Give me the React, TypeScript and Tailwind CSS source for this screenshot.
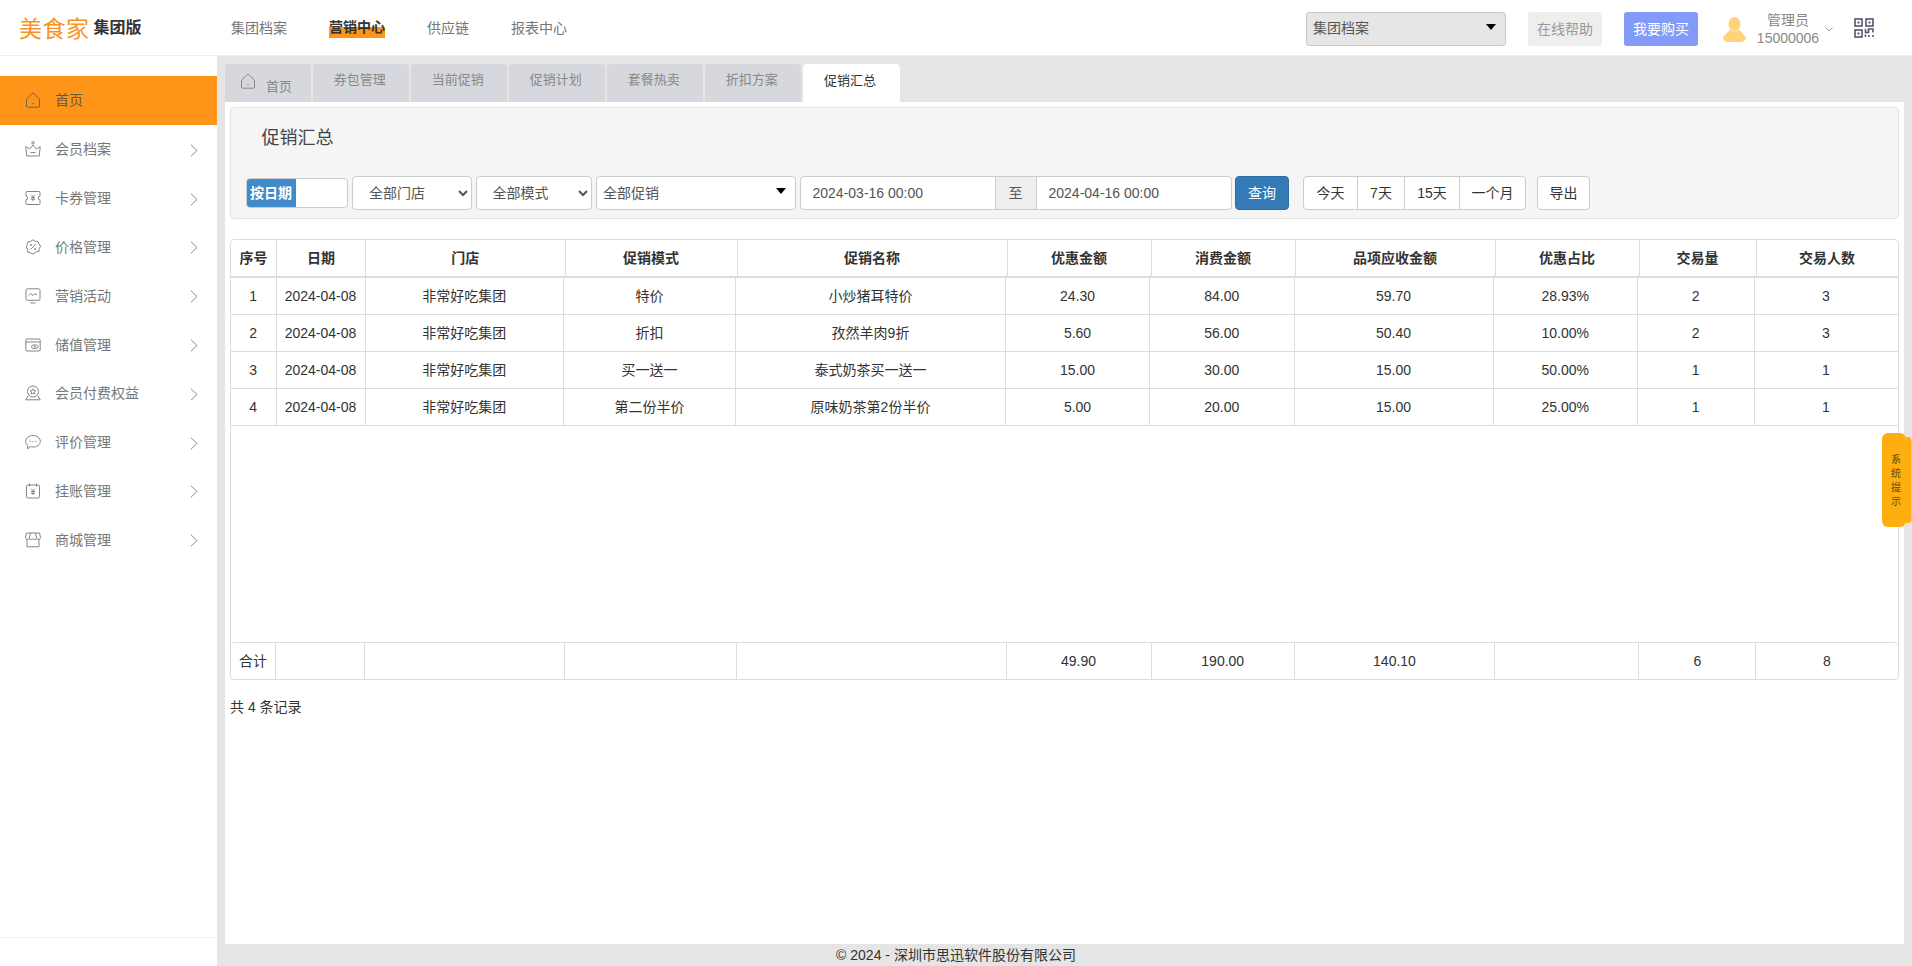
const tabs = ["券包管理", "当前促销", "促销计划", "套餐热卖", "折扣方案"];

const headCols = "grid grid-cols-[46px_89px_199.5px_172px_270px_144px_144px_200px_144px_117px_1fr]";
const bodyCols = "grid grid-cols-[45.5px_89px_198.5px_172px_270px_144px_144.5px_199px_144.5px_116.5px_1fr]";
const footCols = "grid grid-cols-[45px_89px_199.5px_172px_270px_145px_143.5px_200px_144.3px_117px_1fr]";

const headers = ["序号", "日期", "门店", "促销模式", "促销名称", "优惠金额", "消费金额", "品项应收金额", "优惠占比", "交易量", "交易人数"];

const rows = [
  ["1", "2024-04-08", "非常好吃集团", "特价", "小炒猪耳特价", "24.30", "84.00", "59.70", "28.93%", "2", "3"],
  ["2", "2024-04-08", "非常好吃集团", "折扣", "孜然羊肉9折", "5.60", "56.00", "50.40", "10.00%", "2", "3"],
  ["3", "2024-04-08", "非常好吃集团", "买一送一", "泰式奶茶买一送一", "15.00", "30.00", "15.00", "50.00%", "1", "1"],
  ["4", "2024-04-08", "非常好吃集团", "第二份半价", "原味奶茶第2份半价", "5.00", "20.00", "15.00", "25.00%", "1", "1"],
];

const totals = ["合计", "", "", "", "", "49.90", "190.00", "140.10", "", "6", "8"];

function Icon({ children }: { children: React.ReactNode }) {
  return (
    <svg width="16" height="16" viewBox="0 0 16 16" fill="none" stroke="#858585" strokeWidth="1" className="shrink-0">
      {children}
    </svg>
  );
}

function HomeIcon({ stroke = "#858585" }: { stroke?: string }) {
  return (
    <svg width="16" height="16" viewBox="0 0 16 16" fill="none" stroke={stroke} strokeWidth="1" className="shrink-0">
      <path d="M1.5 7 8 .8 14.500 7v7.200a1 1 0 0 1-1 1h-11a1 1 0 0 1-1-1z" strokeLinejoin="round" />
      <path d="M7.300 11.500h1.400" />
    </svg>
  );
}

const menu: { label: string; icon: React.ReactNode }[] = [
  {
    label: "会员档案",
    icon: (
      <Icon>
        <path d="M.8 5.500 4.600 8 8 4l3.400 4 3.800-2.500-.9 9.500H1.700z" strokeLinejoin="round" />
        <circle cx="8" cy="1.800" r="1.200" />
        <path d="M5.500 11.500h5" />
      </Icon>
    ),
  },
  {
    label: "卡券管理",
    icon: (
      <Icon>
        <path d="M2 1.500h12a1 1 0 0 1 1 1v3.800a1.700 1.700 0 0 0 0 3.400v3.800a1 1 0 0 1-1 1H2a1 1 0 0 1-1-1V9.700a1.700 1.700 0 0 0 0-3.400V2.500a1 1 0 0 1 1-1z" />
        <path d="m6.300 4.800 1.700 2 1.700-2M6 7.500h4M8 6.800V11M6 9.300h4" />
      </Icon>
    ),
  },
  {
    label: "价格管理",
    icon: (
      <Icon>
        <path d="m8 .8 2.300 1.500 2.700.1.900 2.500 1.600 2.100-1.100 2.500-.4 2.700-2.600.6L8 15.200l-2.500-1.300-2.600-.6-.4-2.700L1.400 8.100 2.100 5.300l1-2.500 2.600-.5z" strokeLinejoin="round" />
        <path d="m5.500 10.500 5-5" />
        <circle cx="6" cy="6" r=".6" />
        <circle cx="10" cy="10" r=".6" />
      </Icon>
    ),
  },
  {
    label: "营销活动",
    icon: (
      <Icon>
        <rect x="1" y=".8" width="14" height="11.500" rx="1.500" />
        <path d="m3.800 7.500 2-2 2.200 2 2-2 2.200 1.500M5.500 15h5" />
      </Icon>
    ),
  },
  {
    label: "储值管理",
    icon: (
      <Icon>
        <rect x=".8" y="2" width="14.400" height="12" rx="1.200" />
        <path d="M.8 5h14.400" />
        <rect x="6.500" y="8" width="6.500" height="3.400" rx="1.700" />
        <circle cx="9.800" cy="9.700" r=".6" />
      </Icon>
    ),
  },
  {
    label: "会员付费权益",
    icon: (
      <Icon>
        <circle cx="8" cy="6.500" r="5.500" />
        <path d="m8 3.800.9 1.800 1.900.2-1.400 1.300.4 1.900L8 8.100 6.200 9l.4-1.900-1.400-1.300 1.900-.2z" strokeLinejoin="round" />
        <path d="m1 14.500 2-3.500M15 14.500l-2-3.500M.5 14.800h15" />
      </Icon>
    ),
  },
  {
    label: "评价管理",
    icon: (
      <Icon>
        <path d="M8 1.500c3.900 0 7.300 2.500 7.300 5.800S11.900 13 8 13c-.9 0-1.800-.1-2.600-.4L2.500 14.800l.4-3.200C1.500 10.500.7 9 .7 7.300.7 4 4.100 1.500 8 1.500z" strokeLinejoin="round" />
        <path d="M4.800 7.300h.5M7.800 7.300h.5M10.800 7.300h.5" strokeLinecap="round" />
      </Icon>
    ),
  },
  {
    label: "挂账管理",
    icon: (
      <Icon>
        <rect x="1.500" y="2" width="13" height="13" rx="1.200" />
        <path d="M4.500.5v3M11.500.5v3" />
        <path d="m6.300 5.800 1.700 2 1.700-2M6 8.500h4M8 7.800V12M6 10.300h4" />
      </Icon>
    ),
  },
  {
    label: "商城管理",
    icon: (
      <Icon>
        <path d="M1.500 1h13l1 4.500a2 2 0 0 1-3.700 1A2.300 2.300 0 0 1 8 6.500a2.300 2.300 0 0 1-3.800 0 2 2 0 0 1-3.700-1z" strokeLinejoin="round" />
        <path d="M5.500 1 4.200 6.500M10.500 1l1.300 5.500M2 7.500v7.300h12V7.500" />
      </Icon>
    ),
  },
];

function Chevron() {
  return (
    <svg width="8" height="13" viewBox="0 0 8 13" fill="none" stroke="#8a8a8a" strokeWidth="1" className="mt-[2px] shrink-0">
      <path d="m1 .8 6 5.700-6 5.700" />
    </svg>
  );
}

function Caret() {
  return <span className="block h-0 w-0 border-x-[5px] border-t-[6px] border-x-transparent border-t-black" />;
}

function QrIcon() {
  return (
    <svg width="20" height="20" viewBox="0 0 20 20" fill="none" stroke="#55556a" strokeWidth="1.600">
      <rect x="1" y="1" width="7" height="7" />
      <rect x="12" y="1" width="7" height="7" />
      <rect x="1" y="12" width="7" height="7" />
      <rect x="3.500" y="3.500" width="2" height="2" fill="#55556a" stroke="none" />
      <rect x="14.500" y="3.500" width="2" height="2" fill="#55556a" stroke="none" />
      <rect x="3.500" y="14.500" width="2" height="2" fill="#55556a" stroke="none" />
      <path d="M11.500 11v3.500h3V11h4.500v3.500M11.500 19v-2.500M15 19v-2M19 19v-2" />
    </svg>
  );
}

function UserIcon() {
  return (
    <svg width="23" height="25" viewBox="0 0 23 25" fill="#ffd27c">
      <ellipse cx="11.500" cy="7" rx="6" ry="7" />
      <path d="M7 12.500c-2.500 3.500-5 5.500-7 7.500 0 2.500 2 5 5 5h13c3 0 5-2.500 5-5-2-2-4.500-4-7-7.500-2.500 2.500-6.500 2.500-9 0z" />
    </svg>
  );
}

function Header() {
  return (
    <header className="flex h-14 shrink-0 items-center border-b border-[#eeeeee] bg-white">
      <div className="ml-[19px] flex w-[212px] items-center">
        <span className="mt-1 text-[23px] leading-none tracking-[0.5px] text-[#f8931f]">美食家</span>
        <span className="ml-[4px] text-base font-bold text-[#333333]">集团版</span>
      </div>
      <nav className="flex items-center gap-[42px] text-sm text-[#777777]">
        <span>集团档案</span>
        <span className="bg-[linear-gradient(transparent_48%,#ff9518_48%)] font-bold leading-[21px] text-[#333333]">营销中心</span>
        <span>供应链</span>
        <span>报表中心</span>
      </nav>
      <div className="ml-auto mr-[38px] flex items-center pt-[3px]">
        <div className="flex h-[34px] w-[200px] items-start justify-between rounded-[3px] border border-[#c9c9c9] bg-[#e6e6e6] pl-[6px] pr-[9px] text-sm text-[#555555]">
          <span className="leading-[31px]">集团档案</span>
          <span className="mt-[11px]"><Caret /></span>
        </div>
        <button type="button" className="ml-[22px] h-[34px] w-[74px] rounded-[3px] bg-[#eeeeee] text-sm text-[#999999]">在线帮助</button>
        <button type="button" className="ml-[22px] h-[34px] w-[74px] rounded-[3px] bg-[#829bf8] text-sm text-white">我要购买</button>
        <div className="ml-[25px]"><UserIcon /></div>
        <div className="ml-[11px] flex w-[62px] flex-col items-center text-sm leading-[18px] text-[#888888]">
          <span>管理员</span>
          <span>15000006</span>
        </div>
        <svg width="8" height="5" viewBox="0 0 8 5" fill="none" stroke="#999999" className="ml-[6px]"><path d="m.5.5 3.500 3.500L7.500.5" /></svg>
        <div className="ml-[21px] -mt-[3px] flex"><QrIcon /></div>
      </div>
    </header>
  );
}

function Sidebar() {
  return (
    <aside className="flex w-[217px] shrink-0 flex-col bg-white pt-5 text-sm text-[#777777]">
      <div className="flex h-[49px] items-center gap-[14px] bg-[#ff9518] pb-[2px] pl-[25px] text-[#665a45]">
        <HomeIcon stroke="#6f6450" />
        <span>首页</span>
      </div>
      <div className="mt-px">
        {menu.map((m) => (
          <div key={m.label} className="flex h-[48.8px] items-center gap-[14px] pb-[2px] pl-[25px] pr-[19px]">
            {m.icon}
            <span className="flex-1">{m.label}</span>
            <Chevron />
          </div>
        ))}
      </div>
      <div className="mb-7 mt-auto border-t border-[#f0f0f0]" />
    </aside>
  );
}

function Tabs() {
  return (
    <div className="flex h-[38px] shrink-0 gap-[1.5px] text-[13px] text-[#888888]">
      <div className="flex w-[86px] items-center rounded-t bg-[#d6d8dd] pl-[15px]">
        <span className="-mt-1"><HomeIcon stroke="#8a8a8a" /></span>
        <span className="ml-[10px] mt-2">首页</span>
      </div>
      {tabs.map((t) => (
        <div key={t} className="flex w-[96.5px] items-center justify-center rounded-t bg-[#d6d8dd] pb-[6px] pr-[2px]">{t}</div>
      ))}
      <div className="flex w-[97px] items-center justify-center rounded-t bg-white pb-[4px] pr-[2px] text-[#333333]">促销汇总</div>
    </div>
  );
}

function Filters() {
  return (
    <section className="h-28 shrink-0 rounded border border-[#e3e3e3] bg-[#f5f5f5] px-[14.5px]">
      <h1 className="flex h-[60px] items-center pl-4 text-lg font-normal text-[#444444]">促销汇总</h1>
      <div className="mt-2 flex h-[34px] items-center text-sm">
        <div className="flex h-[30px] w-[102px] overflow-hidden rounded border border-[#cccccc] bg-white">
          <span className="flex w-[49px] items-center justify-center bg-[#428bca] font-bold text-white">按日期</span>
        </div>
        <select className="ml-[4.5px] h-[34px] w-[120px] rounded border border-[#cccccc] bg-white pl-3 text-[#555555]">
          <option>全部门店</option>
        </select>
        <select className="ml-[3.5px] h-[34px] w-[116px] rounded border border-[#cccccc] bg-white pl-3 text-[#555555]">
          <option>全部模式</option>
        </select>
        <div className="ml-[4.5px] flex h-[34px] w-[200px] items-start justify-between rounded border border-[#cccccc] bg-white pl-[6px] pr-[9px] text-[#555555]">
          <span className="leading-[32px]">全部促销</span>
          <span className="mt-[11px]"><Caret /></span>
        </div>
        <input readOnly value="2024-03-16 00:00" className="ml-[3.5px] h-[34px] w-[196px] rounded-l border border-[#cccccc] bg-white px-3 text-[#555555] outline-none" />
        <span className="flex h-[34px] w-[40px] items-center justify-center border-y border-[#cccccc] bg-[#eeeeee] text-[#555555]">至</span>
        <input readOnly value="2024-04-16 00:00" className="h-[34px] w-[196px] rounded-r border border-[#cccccc] bg-white px-3 text-[#555555] outline-none" />
        <button type="button" className="ml-[3.5px] h-[34px] w-[54px] rounded border border-[#2e6da4] bg-[#337ab7] text-white">查询</button>
        <div className="ml-[14px] flex h-[34px] rounded border border-[#cccccc] bg-white text-[#333333]">
          <span className="flex w-[53px] items-center justify-center">今天</span>
          <span className="flex w-[47px] items-center justify-center border-l border-[#cccccc]">7天</span>
          <span className="flex w-[55px] items-center justify-center border-l border-[#cccccc]">15天</span>
          <span className="flex w-[66px] items-center justify-center border-l border-[#cccccc]">一个月</span>
        </div>
        <button type="button" className="ml-[11px] h-[34px] w-[53px] rounded border border-[#cccccc] bg-white text-[#333333]">导出</button>
      </div>
    </section>
  );
}

function DataTable() {
  return (
    <section className="mt-5 flex h-[441px] shrink-0 flex-col rounded border border-[#dddddd] text-sm text-[#333333]">
      <div className={`${headCols} h-[38px] shrink-0 border-b-2 border-[#dddddd] font-bold`}>
        {headers.map((h, i) => (
          <div key={h} className={`flex items-center justify-center ${i < 10 ? "border-r border-[#dddddd]" : ""}`}>{h}</div>
        ))}
      </div>
      <div className="flex-1">
        {rows.map((row) => (
          <div key={row[0]} className={`${bodyCols} h-[37px] border-b border-[#dddddd]`}>
            {row.map((c, i) => (
              <div key={i} className={`flex items-center justify-center ${i < 10 ? "border-r border-[#dddddd]" : ""}`}>{c}</div>
            ))}
          </div>
        ))}
      </div>
      <div className={`${footCols} h-[37px] shrink-0 rounded-t border-t border-[#dddddd]`}>
        {totals.map((c, i) => (
          <div key={i} className={`flex items-center justify-center ${i < 10 ? "border-r border-[#dddddd]" : ""}`}>{c}</div>
        ))}
      </div>
    </section>
  );
}

function NoticeTab() {
  return (
    <div className="absolute right-0 top-[433px] flex h-[94px] w-[30px] text-[10px] leading-[14px] text-[#5c4a1c]">
      <div className="flex w-6 flex-col items-center justify-center rounded-md bg-[#ffae0f] pl-1 pt-px">
        <span>系</span>
        <span>统</span>
        <span>提</span>
        <span>示</span>
      </div>
      <div className="my-1 w-[6px] rounded-r-sm border-r border-dotted border-[#ffe2a8] bg-[#ffae0f]" />
    </div>
  );
}

export default function App() {
  return (
    <div className="relative flex h-screen w-full flex-col overflow-hidden bg-white font-['Liberation_Sans','Noto_Sans_CJK_SC',sans-serif]">
      <Header />
      <div className="flex min-h-0 flex-1">
        <Sidebar />
        <main className="flex min-w-0 flex-1 flex-col bg-[#e5e5e5] px-2 pt-2">
          <Tabs />
          <div className="flex min-h-0 flex-1 flex-col bg-white pl-[5px] pr-[5.5px] pt-[5px]">
            <Filters />
            <DataTable />
            <p className="mt-[17px] text-sm text-[#333333]">共 4 条记录</p>
          </div>
          <footer className="flex h-[22px] shrink-0 items-center justify-center pr-[217px] text-sm text-[#333333]">© 2024 - 深圳市思迅软件股份有限公司</footer>
        </main>
      </div>
      <NoticeTab />
    </div>
  );
}
